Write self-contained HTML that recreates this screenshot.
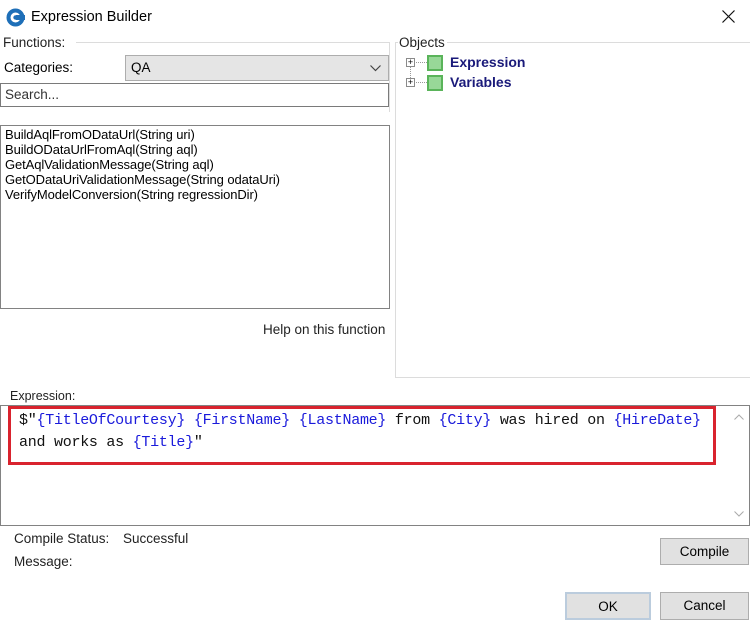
<!DOCTYPE html>
<html><head><style>
*{margin:0;padding:0;box-sizing:border-box}
body{width:750px;height:620px;background:#fff;font-family:"Liberation Sans",sans-serif;font-size:13px;color:#000;position:relative;overflow:hidden}
.a{position:absolute}
.mono{font-family:"Liberation Mono",monospace;font-size:15px;letter-spacing:-0.26px;line-height:22px;color:#111}
.b{color:#1a1adb}
.btn{position:absolute;background:#e1e1e1;border:1px solid #adadad;text-align:center;line-height:25px;font-size:13.5px}
</style></head><body>
<svg class="a" style="left:6px;top:8px" width="19" height="19" viewBox="0 0 19 19"><circle cx="9.5" cy="9.5" r="9" fill="#1e6fb8"/><circle cx="9.5" cy="9.5" r="5" fill="#fff"/><rect x="10" y="7" width="9" height="5" fill="#1e6fb8"/><circle cx="9.5" cy="9.5" r="2.2" fill="#1e6fb8"/></svg>
<div class="a" style="left:31px;top:9px;font-size:14.5px">Expression Builder</div>
<svg class="a" style="left:722px;top:10px" width="13" height="13" viewBox="0 0 13 13"><path d="M0.5 0.5L12.5 12.5M12.5 0.5L0.5 12.5" stroke="#111" stroke-width="1.2"/></svg>

<div class="a" style="left:76px;top:42px;width:313px;border-top:1px solid #dcdcdc"></div>
<div class="a" style="left:389px;top:42px;height:70px;border-left:1px solid #dcdcdc"></div>
<div class="a" style="left:3px;top:35px;font-size:13.5px;color:#222">Functions:</div>
<div class="a" style="left:4px;top:60px;font-size:13.5px">Categories:</div>
<div class="a" style="left:125px;top:55px;width:264px;height:26px;background:#e5e5e5;border:1px solid #adadad;padding:4px 5px;font-size:13.5px">QA<svg style="position:absolute;right:7px;top:9px" width="11" height="7" viewBox="0 0 11 7"><path d="M0.5 0.5L5.5 5.5L10.5 0.5" fill="none" stroke="#444" stroke-width="1.2"/></svg></div>
<div class="a" style="left:0;top:83px;width:389px;height:24px;border:1px solid #7a7a7a;padding:3px 4px;font-size:13.5px;color:#333">Search...</div>
<div class="a" style="left:0;top:125px;width:390px;height:184px;border:1px solid #828282;padding:1px 4px;font-size:13px;line-height:15px;letter-spacing:-0.1px">BuildAqlFromODataUrl(String uri)<br>BuildODataUrlFromAql(String aql)<br>GetAqlValidationMessage(String aql)<br>GetODataUriValidationMessage(String odataUri)<br>VerifyModelConversion(String regressionDir)</div>
<div class="a" style="left:263px;top:322px;font-size:13.5px;color:#222">Help on this function</div>

<div class="a" style="left:395px;top:42px;width:360px;height:336px;border:1px solid #dcdcdc;border-right:none"></div>
<div class="a" style="left:398px;top:35px;background:#fff;padding:0 2px 0 1px;font-size:13.5px;color:#222">Objects</div>
<div class="a" style="left:406px;top:58px;width:9px;height:9px;border:1px solid #8a8a8a;font-size:9px;line-height:7px;text-align:center">+</div>
<div class="a" style="left:406px;top:78px;width:9px;height:9px;border:1px solid #8a8a8a;font-size:9px;line-height:7px;text-align:center">+</div>
<div class="a" style="left:410px;top:67px;height:11px;border-left:1px dotted #999"></div>
<div class="a" style="left:416px;top:62px;width:11px;border-top:1px dotted #999"></div>
<div class="a" style="left:416px;top:82px;width:11px;border-top:1px dotted #999"></div>
<div class="a" style="left:427px;top:55px;width:16px;height:16px;background:#98d898;border:2px solid #5ab45a"></div>
<div class="a" style="left:427px;top:75px;width:16px;height:16px;background:#98d898;border:2px solid #5ab45a"></div>
<div class="a" style="left:450px;top:54px;font-weight:bold;color:#1a1a7a;font-size:14px">Expression</div>
<div class="a" style="left:450px;top:74px;font-weight:bold;color:#1a1a7a;font-size:14px">Variables</div>

<div class="a" style="left:10px;top:389px;font-size:12.5px;color:#222">Expression:</div>
<div class="a" style="left:0;top:405px;width:750px;height:121px;border:1px solid #828282"></div>
<svg class="a" style="left:734px;top:414px" width="10" height="6" viewBox="0 0 10 6"><path d="M0.5 5.5L5 1L9.5 5.5" fill="none" stroke="#aaa"/></svg>
<svg class="a" style="left:734px;top:511px" width="10" height="6" viewBox="0 0 10 6"><path d="M0.5 0.5L5 5L9.5 0.5" fill="none" stroke="#aaa"/></svg>
<div class="a" style="left:8px;top:406px;width:708px;height:59px;border:3px solid #d9232e"></div>
<div class="a mono" style="left:19px;top:410px">$"<span class="b">{TitleOfCourtesy}</span> <span class="b">{FirstName}</span> <span class="b">{LastName}</span> from <span class="b">{City}</span> was hired on <span class="b">{HireDate}</span><br>and works as <span class="b">{Title}</span>"</div>

<div class="a" style="left:14px;top:531px;font-size:13.5px;color:#222">Compile Status:</div>
<div class="a" style="left:123px;top:531px;font-size:13.5px;color:#222">Successful</div>
<div class="a" style="left:14px;top:554px;font-size:13.5px;color:#222">Message:</div>
<div class="btn" style="left:660px;top:538px;width:89px;height:27px">Compile</div>
<div class="btn" style="left:565px;top:592px;width:86px;height:28px;border:2px solid #bcd;">OK</div>
<div class="btn" style="left:660px;top:592px;width:89px;height:28px">Cancel</div>
</body></html>
